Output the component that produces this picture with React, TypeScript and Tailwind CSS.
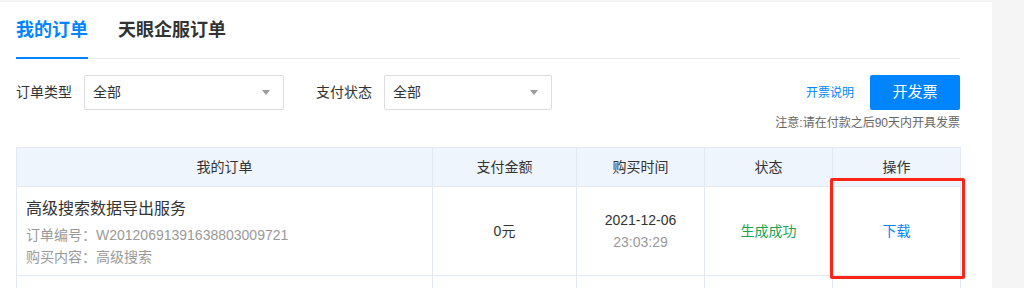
import { useState } from 'react'

type Order = {
  title: string
  orderNo: string
  content: string
  amount: string
  date: string
  time: string
  status: string
}

const orders: Order[] = [
  {
    title: '高级搜索数据导出服务',
    orderNo: 'W20120691391638803009721',
    content: '高级搜索',
    amount: '0元',
    date: '2021-12-06',
    time: '23:03:29',
    status: '生成成功',
  },
]

function Select({ width }: { width: string }) {
  return (
    <div
      className={`${width} flex h-[35px] items-center justify-between rounded-[2px] border border-[#dcdcdc] bg-white pl-[8px] pr-[13px] text-[14px] text-[#333]`}
    >
      <span>全部</span>
      {/* little grey caret */}
      <span className="h-0 w-0 border-x-[4.5px] border-t-[5px] border-x-transparent border-t-[#9a9a9a]" />
    </div>
  )
}

export default function App() {
  const [tab, setTab] = useState(0)
  const tabs = ['我的订单', '天眼企服订单']

  return (
    <div
      className="relative h-[288px] w-[1024px] overflow-hidden bg-[#f5f5f5] pt-[2px]"
      style={{ fontFamily: '"Liberation Sans", "Noto Sans CJK SC", sans-serif' }}
    >
      <div className="h-[300px] w-[992px] bg-white pl-4 pr-8">
        {/* tabs */}
        <div className="flex h-[57px] gap-[30px] border-b border-[#ececec]">
          {tabs.map((t, i) => (
            <button
              key={t}
              onClick={() => setTab(i)}
              className={`relative flex h-full items-center text-[18px] font-bold ${
                tab === i ? 'text-[#0084ff]' : 'text-[#333]'
              }`}
            >
              {t}
              {tab === i && (
                <span className="absolute bottom-[-1px] left-0 h-[2px] w-full bg-[#0084ff]" />
              )}
            </button>
          ))}
        </div>

        {/* filters */}
        <div className="mt-[16px] flex items-start justify-between">
          <div className="flex items-center text-[14px] text-[#333]">
            <span className="mr-[12px]">订单类型</span>
            <Select width="w-[200px]" />
            <span className="ml-[32px] mr-[12px]">支付状态</span>
            <Select width="w-[168px]" />
          </div>
          <div className="flex flex-col items-end">
            <div className="flex items-center">
              <a className="mr-[16px] text-[12px] text-[#0084ff]">开票说明</a>
              <button className="h-[35px] w-[90px] rounded-[2px] bg-[#0084ff] text-[15px] text-white">
                开发票
              </button>
            </div>
            <p className="mt-[5px] text-[12px] leading-[16px] text-[#666]">
              注意:请在付款之后90天内开具发票
            </p>
          </div>
        </div>

        {/* orders table */}
        <table className="mt-[16px] w-[944px] table-fixed border-collapse text-[14px] text-[#333]">
          <colgroup>
            <col className="w-[416px]" />
            <col className="w-[144px]" />
            <col className="w-[128px]" />
            <col className="w-[128px]" />
            <col className="w-[128px]" />
          </colgroup>
          <thead>
            <tr className="h-[39px] bg-[#eef5fd]">
              {['我的订单', '支付金额', '购买时间', '状态', '操作'].map((h) => (
                <th key={h} className="border border-[#e1e9f2] font-normal">
                  {h}
                </th>
              ))}
            </tr>
          </thead>
          <tbody>
            {orders.map((o) => (
              <tr key={o.orderNo} className="h-[89px]">
                <td className="border border-[#e1e9f2] px-[9px] pt-[10px] align-top">
                  <div className="text-[16px] leading-[24px] text-[#333]">{o.title}</div>
                  <div className="mt-[3px] leading-[22px] text-[#999]">订单编号：{o.orderNo}</div>
                  <div className="leading-[22px] text-[#999]">购买内容：{o.content}</div>
                </td>
                <td className="border border-[#e1e9f2] text-center">{o.amount}</td>
                <td className="border border-[#e1e9f2] text-center">
                  <div className="leading-[22px]">{o.date}</div>
                  <div className="leading-[22px] text-[#999]">{o.time}</div>
                </td>
                <td className="border border-[#e1e9f2] text-center text-[#17a34f]">{o.status}</td>
                <td className="border border-[#e1e9f2] text-center">
                  <a className="text-[#0084ff]">下载</a>
                </td>
              </tr>
            ))}
            {/* next row, only its top edge is in view */}
            <tr className="h-[89px]">
              <td className="border border-[#e1e9f2]" />
              <td className="border border-[#e1e9f2]" />
              <td className="border border-[#e1e9f2]" />
              <td className="border border-[#e1e9f2]" />
              <td className="border border-[#e1e9f2]" />
            </tr>
          </tbody>
        </table>
      </div>

      {/* red annotation box over the download cell */}
      <div className="absolute left-[830px] top-[178px] h-[101px] w-[135px] rounded-[2px] border-[3px] border-[#ff2418]" />
    </div>
  )
}
